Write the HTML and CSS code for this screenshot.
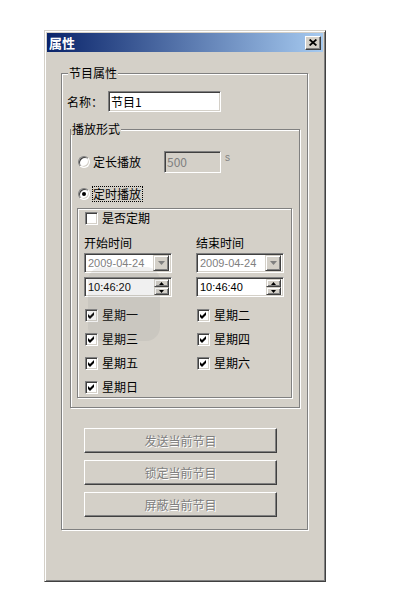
FILE: index.html
```html
<!DOCTYPE html>
<html>
<head>
<meta charset="utf-8">
<link rel="stylesheet" href="styles.css">
</head>
<body>
<div class="window">
  <div class="titlebar">
    <span class="title">属性</span>
    <span class="close"><svg width="8" height="7" viewBox="0 0 8 7"><path d="M0.6 0.5 L7.4 6.5 M7.4 0.5 L0.6 6.5" stroke="#000" stroke-width="1.7" fill="none"/></svg></span>
  </div>
  <div class="client">
    <div class="group g-main">
      <div class="legend l-main">节目属性</div>
      <div class="name-row">
        <span class="label">名称：</span>
        <div class="edit name-edit">节目1</div>
      </div>
      <div class="group g-play">
        <div class="legend l-play">播放形式</div>
        <div class="radio-row r1">
          <span class="radio"></span><span class="rtext">定长播放</span>
          <div class="edit dis len-edit">500</div>
          <span class="unit">s</span>
        </div>
        <div class="radio-row r2">
          <span class="radio on"></span><span class="rtext focus">定时播放</span>
        </div>
        <div class="group g-time">
          <div class="check-row periodic"><span class="check"></span><span class="ctext">是否定期</span></div>
          <div class="cols">
            <div class="col">
              <div class="col-title">开始时间</div>
              <div class="edit combo"><span class="val dim">2009-04-24</span><span class="dd"><svg width="7" height="4" viewBox="0 0 7 4"><path d="M0 0H7L3.5 4Z" fill="#808080"/></svg></span></div>
              <div class="edit spin"><span class="val">10:46:20</span><span class="spinbtn"><span class="sb"><svg width="5" height="3" viewBox="0 0 5 3"><path d="M0 3H5L2.5 0Z" fill="#000"/></svg></span><span class="sb"><svg width="5" height="3" viewBox="0 0 5 3"><path d="M0 0H5L2.5 3Z" fill="#000"/></svg></span></span></div>
            </div>
            <div class="col">
              <div class="col-title">结束时间</div>
              <div class="edit combo"><span class="val dim">2009-04-24</span><span class="dd"><svg width="7" height="4" viewBox="0 0 7 4"><path d="M0 0H7L3.5 4Z" fill="#808080"/></svg></span></div>
              <div class="edit spin"><span class="val">10:46:40</span><span class="spinbtn"><span class="sb"><svg width="5" height="3" viewBox="0 0 5 3"><path d="M0 3H5L2.5 0Z" fill="#000"/></svg></span><span class="sb"><svg width="5" height="3" viewBox="0 0 5 3"><path d="M0 0H5L2.5 3Z" fill="#000"/></svg></span></span></div>
            </div>
          </div>
          <div class="days">
            <div class="check-row"><span class="check on"><svg width="7" height="7" viewBox="0 0 7 7"><path d="M0 2L2 4L6 0V3L2 7L0 5Z" fill="#000"/></svg></span><span class="ctext">星期一</span></div>
            <div class="check-row"><span class="check on"><svg width="7" height="7" viewBox="0 0 7 7"><path d="M0 2L2 4L6 0V3L2 7L0 5Z" fill="#000"/></svg></span><span class="ctext">星期二</span></div>
            <div class="check-row"><span class="check on"><svg width="7" height="7" viewBox="0 0 7 7"><path d="M0 2L2 4L6 0V3L2 7L0 5Z" fill="#000"/></svg></span><span class="ctext">星期三</span></div>
            <div class="check-row"><span class="check on"><svg width="7" height="7" viewBox="0 0 7 7"><path d="M0 2L2 4L6 0V3L2 7L0 5Z" fill="#000"/></svg></span><span class="ctext">星期四</span></div>
            <div class="check-row"><span class="check on"><svg width="7" height="7" viewBox="0 0 7 7"><path d="M0 2L2 4L6 0V3L2 7L0 5Z" fill="#000"/></svg></span><span class="ctext">星期五</span></div>
            <div class="check-row"><span class="check on"><svg width="7" height="7" viewBox="0 0 7 7"><path d="M0 2L2 4L6 0V3L2 7L0 5Z" fill="#000"/></svg></span><span class="ctext">星期六</span></div>
            <div class="check-row"><span class="check on"><svg width="7" height="7" viewBox="0 0 7 7"><path d="M0 2L2 4L6 0V3L2 7L0 5Z" fill="#000"/></svg></span><span class="ctext">星期日</span></div>
          </div>
        </div>
      </div>
      <div class="buttons">
        <div class="btn">发送当前节目</div>
        <div class="btn">锁定当前节目</div>
        <div class="btn">屏蔽当前节目</div>
      </div>
    </div>
  </div>
  <div class="wm-icon"></div>
</div>
</body>
</html>
```
FILE: styles.css
```css
* { box-sizing: border-box; }

body {
  margin: 0;
  background: #fff;
  font-family: "Noto Sans CJK SC", "Liberation Sans", sans-serif;
  font-size: 12px;
  line-height: 14px;
  color: #000;
}

.window {
  position: relative;
  margin: 30px 0 0 44px;
  width: 282px;
  height: 552px;
  background: #d4d0c8;
  border: 1px solid;
  border-color: #d4d0c8 #404040 #404040 #d4d0c8;
  box-shadow: inset 1px 1px #fff, inset -1px -1px #808080;
  padding: 2px;
}

.titlebar {
  height: 19px;
  display: flex;
  align-items: center;
  padding-left: 2px;
  background: linear-gradient(to right, #0a246a, #a6caf0);
}

.title {
  color: #fff;
  font-weight: bold;
  font-size: 13px;
}

.close {
  margin-left: auto;
  margin-right: 2px;
  width: 16px;
  height: 14px;
  background: #d4d0c8;
  border: 1px solid;
  border-color: #fff #404040 #404040 #fff;
  box-shadow: inset -1px -1px #808080;
  display: flex;
  align-items: center;
  justify-content: center;
}

.close svg { display: block; }

.client { padding-top: 21px; }

.group {
  border: 1px solid #808080;
  box-shadow: inset 1px 1px #fff, 1px 1px #fff;
}

.legend {
  width: fit-content;
  height: 12px;
  line-height: 12px;
  margin-top: -7px;
  background: #d4d0c8;
  padding: 0 1px;
}

.g-main {
  margin-left: 14px;
  width: 247px;
  padding-bottom: 12px;
}

.l-main { margin-left: 6px; }

.name-row {
  display: flex;
  align-items: center;
  margin-top: 12px;
  height: 21px;
}

.label { margin-left: 5px; }

.edit {
  background: #fff;
  border: 1px solid;
  border-color: #808080 #fff #fff #808080;
  box-shadow: inset 1px 1px #404040, inset -1px -1px #d4d0c8;
  display: flex;
  align-items: center;
}

.name-edit {
  margin-left: 5px;
  width: 113px;
  height: 21px;
  padding-left: 2px;
}

.g-play {
  margin-top: 17px;
  margin-left: 8px;
  width: 230px;
  padding-bottom: 9px;
}

.radio-row {
  display: flex;
  align-items: center;
  height: 22px;
}

.r1 { margin-top: 16px; }
.r2 { margin-top: 10px; }

.radio {
  margin-left: 7px;
  width: 12px;
  height: 12px;
  border-radius: 50%;
  background: #fff;
  border: 1px solid;
  border-color: #808080 #fff #fff #808080;
  box-shadow: inset 1px 1px #404040, inset -1px -1px #d4d0c8;
  display: flex;
  align-items: center;
  justify-content: center;
}

.radio.on::after {
  content: "";
  width: 4px;
  height: 4px;
  border-radius: 50%;
  background: #000;
}

.rtext { margin-left: 3px; }

.rtext.focus {
  margin-left: 2px;
  border: 1px dotted #000;
  padding-right: 1px;
}

.dis { background: #d4d0c8; color: #808080; }

.len-edit {
  margin-left: 23px;
  width: 57px;
  height: 22px;
  padding-left: 2px;
}

.unit {
  align-self: flex-start;
  margin-left: 4px;
  color: #808080;
  font-family: "Liberation Sans", sans-serif;
  font-size: 10px;
}

.g-time {
  margin-top: 3px;
  margin-left: 6px;
  width: 215px;
  padding: 0 0 2px 6px;
}

.check-row {
  display: flex;
  align-items: center;
  height: 16px;
}

.periodic { margin-top: 1px; }

.check {
  margin-left: 1px;
  width: 13px;
  height: 13px;
  background: #fff;
  border: 1px solid;
  border-color: #808080 #fff #fff #808080;
  box-shadow: inset 1px 1px #404040, inset -1px -1px #d4d0c8;
  display: flex;
  align-items: center;
  justify-content: center;
}

.check svg { display: block; }

.ctext { margin-left: 4px; }

.cols {
  display: flex;
  margin-top: 10px;
}

.col { flex: none; width: 112px; }

.col-title { height: 14px; }

.combo {
  margin-top: 3px;
  width: 88px;
  height: 20px;
  padding: 0 2px 0 3px;
}

.spin {
  margin-top: 4px;
  width: 88px;
  height: 20px;
  padding: 0 2px 0 3px;
}

.val {
  flex: 1;
  font-family: "Liberation Sans", sans-serif;
  font-size: 11px;
}

.dim { color: #808080; }

.dd {
  width: 16px;
  height: 16px;
  background: #d4d0c8;
  border: 1px solid;
  border-color: #d4d0c8 #404040 #404040 #d4d0c8;
  box-shadow: inset 1px 1px #fff, inset -1px -1px #808080;
  display: flex;
  align-items: center;
  justify-content: center;
}

.spinbtn {
  width: 15px;
  height: 16px;
  display: flex;
  flex-direction: column;
}

.sb {
  flex: 1;
  background: #d4d0c8;
  border: 1px solid;
  border-color: #d4d0c8 #404040 #404040 #d4d0c8;
  box-shadow: inset 1px 1px #fff, inset -1px -1px #808080;
  display: flex;
  align-items: center;
  justify-content: center;
}

.sb svg { display: block; }

.days {
  margin-top: 10px;
  display: grid;
  grid-template-columns: 112px 94px;
  row-gap: 8px;
}

.buttons {
  margin-top: 20px;
  margin-left: 22px;
  display: flex;
  flex-direction: column;
  gap: 7px;
}

.btn {
  width: 193px;
  height: 25px;
  border: 1px solid;
  border-color: #fff #404040 #404040 #fff;
  box-shadow: inset -1px -1px #808080;
  display: flex;
  align-items: center;
  justify-content: center;
  color: #808080;
  text-shadow: 1px 1px #fff;
}

.wm-icon {
  position: absolute;
  left: 43px;
  top: 236px;
  width: 72px;
  height: 74px;
  border-radius: 14px;
  background: rgba(140, 140, 140, 0.13);
}
```
